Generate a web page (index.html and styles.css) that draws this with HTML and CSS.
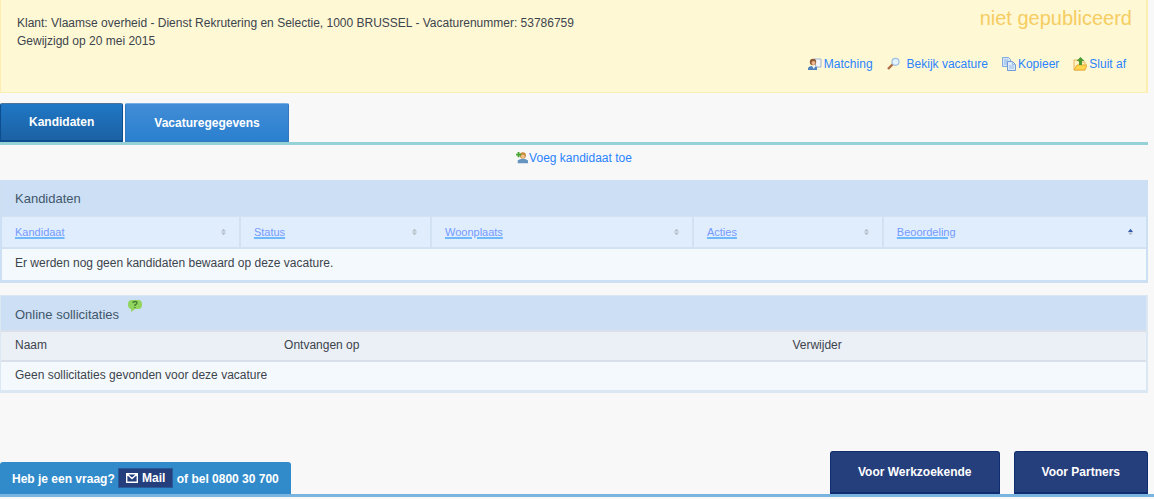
FILE: index.html
```html
<!DOCTYPE html>
<html lang="nl">
<head>
<meta charset="utf-8">
<meta name="viewport" content="width=device-width, initial-scale=1">
<title>Vacature</title>
<link rel="stylesheet" href="styles.css">
</head>
<body>
<div class="page">
<header class="notice">
  <div class="details">
    <p>Klant: Vlaamse overheid - Dienst Rekrutering en Selectie, 1000 BRUSSEL - Vacaturenummer: 53786759</p>
    <p>Gewijzigd op 20 mei 2015</p>
  </div>
  <div class="side">
    <div class="state">niet gepubliceerd</div>
    <nav class="actions">
      <a href="#"><svg class="icon" viewBox="0 0 14 14"><path d="M6 2h7v8H8z" fill="#f3f6fa" stroke="#9eb4cf"/><circle cx="5" cy="5" r="3.2" fill="#8f5a35"/><circle cx="5.5" cy="6" r="2" fill="#eeb78d"/><path d="M0 13v-2q1-2 4-2l5 1v3z" fill="#4f83bf"/><path d="M4 9l2 3 1-3" fill="#fff"/></svg>Matching</a>
      <a href="#" class="spaced"><svg class="icon" viewBox="0 0 14 14"><path d="M1 12l5-5" stroke="#b06d45" stroke-width="2.4"/><circle cx="8.5" cy="4.8" r="3.5" fill="#e3f3ff" stroke="#9ebfe4" stroke-width="1.2"/></svg>Bekijk vacature</a>
      <a href="#"><svg class="icon" viewBox="0 0 14 14"><path d="M.5 .5h6l2 2v7h-8z" fill="#d4e5f9" stroke="#80a9dc"/><path d="M2 3h4M2 5h4M2 7h3" stroke="#8fb4e2"/><path d="M5.500 4.500h5l3 3v6h-8z" fill="#dceafa" stroke="#6f9bd4"/><path d="M10.500 4.500v3h3M7 9h5M7 11h5" fill="none" stroke="#9dbde5"/></svg>Kopieer</a>
      <a href="#"><svg class="icon" viewBox="0 0 14 14"><path d="M1 3h4l1 2h6v8H1z" fill="#fff2c4" stroke="#e5b65b"/><path d="M1 13l3-5h10l-2 5z" fill="#ffd64d" stroke="#e7ad3a"/><path d="M7.500 0l4 4H9v4H6V4H3.500z" fill="#4c9b32"/></svg>Sluit af</a>
    </nav>
  </div>
</header>

<nav class="tabs">
  <button type="button" class="tab current">Kandidaten</button>
  <button type="button" class="tab">Vacaturegegevens</button>
</nav>
<div class="add"><a href="#"><svg class="icon" viewBox="0 0 14 14"><circle cx="8" cy="4" r="3.600" fill="#c58b3d"/><circle cx="8" cy="5" r="2.200" fill="#f0c086"/><path d="M2 13v-3q2-2 6-2t6 2v3z" fill="#6594bf"/><path d="M0 3h6M3 0v6" stroke="#4aa632" stroke-width="2.200"/></svg>Voeg kandidaat toe</a></div>

<section class="panel">
  <h2 class="title">Kandidaten</h2>
  <table class="grid candidates">
    <colgroup><col class="c1"><col class="c2"><col class="c3"><col class="c4"><col class="c5"></colgroup>
    <thead><tr>
      <th><div class="head"><a href="#">Kandidaat</a><svg class="sort" viewBox="0 0 6 8"><path d="M3 0l3 3.500H0zM0 4.500h6L3 8z"/></svg></div></th>
      <th><div class="head"><a href="#">Status</a><svg class="sort" viewBox="0 0 6 8"><path d="M3 0l3 3.500H0zM0 4.500h6L3 8z"/></svg></div></th>
      <th><div class="head"><a href="#">Woonplaats</a><svg class="sort" viewBox="0 0 6 8"><path d="M3 0l3 3.500H0zM0 4.500h6L3 8z"/></svg></div></th>
      <th><div class="head"><a href="#">Acties</a><svg class="sort" viewBox="0 0 6 8"><path d="M3 0l3 3.500H0zM0 4.500h6L3 8z"/></svg></div></th>
      <th><div class="head"><a href="#">Beoordeling</a><svg class="sort" viewBox="0 0 6 8"><path d="M0 4.500h6L3 8z"/><path class="on" d="M3 0l3 4H0z"/></svg></div></th>
    </tr></thead>
    <tbody><tr><td colspan="5">Er werden nog geen kandidaten bewaard op deze vacature.</td></tr></tbody>
  </table>
</section>

<section class="panel online">
  <h2 class="title">Online sollicitaties<svg class="help" viewBox="0 0 14 12"><path d="M4 0h6q4 0 4 4v1q0 4-4 4H7l-4 3V9Q0 8 0 5V4q0-4 4-4z" fill="#91d45e"/><path d="M5 3q0-1.500 2-1.500T9 3Q9 4 7 5v1M7 7v1" fill="none" stroke="#477e31" stroke-width="1.400"/></svg></h2>
  <table class="grid applications">
    <colgroup><col class="a1"><col class="a2"><col class="a3"></colgroup>
    <thead><tr><th>Naam</th><th>Ontvangen op</th><th>Verwijder</th></tr></thead>
    <tbody><tr><td colspan="3">Geen sollicitaties gevonden voor deze vacature</td></tr></tbody>
  </table>
</section>
</div>

<footer class="footer">
  <div class="contact">Heb je een vraag?
    <a class="mail" href="#"><svg class="envelope" viewBox="0 0 12 10"><path d="M.7 .7h10.600v8.600H.7zM1 1l5 4.500L11 1" fill="none" stroke="#fff" stroke-width="1.400"/></svg>Mail</a>
    of bel 0800 30 700</div>
  <nav class="links">
    <a href="#">Voor Werkzoekende</a>
    <a href="#">Voor Partners</a>
  </nav>
</footer>
</body>
</html>
```
FILE: styles.css
```css
* { box-sizing: border-box; }
body {
  margin: 0;
  background: #f8f8f8;
  color: #3c444c;
  font: 12px/18px "Liberation Sans", Arial, sans-serif;
}
a { color: #2a83ff; text-decoration: none; }
p { margin: 0; }
.page { padding-right: 6px; }

.notice {
  display: flex;
  justify-content: space-between;
  background: #fff8d5;
  border: 1px solid #fbeeb0;
  border-top: 0;
  border-right-width: 2px;
}
.details { padding: 14px 16px; }
.side { padding: 6px 14px 19px 0; text-align: right; }
.state { color: #f5cd62; font-size: 20px; line-height: 24px; }
.actions {
  display: flex;
  justify-content: flex-end;
  gap: 14px;
  padding: 25px 6px 0 0;
}
.actions a, .add a { display: flex; align-items: center; gap: 2px; }
.actions .spaced { gap: 6px; }
.icon { width: 14px; height: 14px; }

.tabs {
  display: flex;
  gap: 2px;
  margin-top: 10px;
  border-bottom: 3px solid #96d1d8;
}
.tab {
  height: 39px;
  padding: 0 28px;
  border: 1px solid #3478bd;
  border-top-color: #78aee1;
  border-radius: 2px 2px 0 0;
  background: linear-gradient(#428cd6, #2a80cf);
  color: #fff;
  font: bold 12px/16px "Liberation Sans", Arial, sans-serif;
}
.current {
  border: 1px solid #0b4d8e;
  border-bottom-width: 2px;
  border-top-color: #4d7398;
  background: linear-gradient(#1f77c5, #1c61a3);
}
.add { display: flex; justify-content: center; padding: 4px 0 13px; }
.add .icon { width: 12px; height: 12px; }
.add a { gap: 1px; }

.panel { border: 1px solid #cddff3; border-width: 1px 2px 3px; }
.online { margin-top: 12px; border-color: #dbe7f2; border-left-width: 1px; }
.title {
  margin: 0;
  padding: 9px 13px 8px;
  background: #cddff4;
  color: #41576c;
  font-size: 13px;
  font-weight: normal;
  line-height: 18px;
}
.grid {
  width: 100%;
  border-collapse: collapse;
  table-layout: fixed;
}
.grid th { padding: 0 13px; text-align: left; font-weight: normal; }
.grid td { padding: 0 13px; background: #f4f9fd; }
.candidates th {
  height: 31px;
  border: 2px solid #d2e2f3;
  border-width: 1px 2px 2px 0;
  background: #e0edfd;
}
.candidates th:last-child { border-right: 0; }
.candidates td { height: 32px; padding-bottom: 3px; }
.head { display: flex; align-items: center; justify-content: space-between; font-size: 11px; }
.head a { text-decoration: underline 2px #70b9ff; text-underline-offset: 1px; color: #749aff; }
.sort { width: 5px; height: 8px; fill: #b5bec8; }
.sort .on { fill: #3057a8; }
.c1 { width: 20.8%; }
.c2 { width: 16.7%; }
.c3 { width: 22.9%; }
.c4 { width: 16.6%; }
.c5 { width: 23%; }
.online .title {
  display: flex;
  align-items: flex-start;
  gap: 9px;
  padding: 10px 14px 6px;
}
.online .help { width: 14px; height: 12px; margin-top: -6px; }
.applications th {
  height: 30px;
  padding: 0 14px 2px;
  border: 2px solid #d9e0ea;
  border-width: 2px 0;
  background: #ebeff6;
}
.applications td { height: 29px; padding: 0 14px 2px; }
.a1 { width: 23.5%; }
.a2 { width: 44.4%; }

.footer {
  display: flex;
  align-items: flex-end;
  justify-content: space-between;
  margin-top: 58px;
  padding-right: 6px;
  border-bottom: 3px solid #78b4df;
}
.contact {
  padding: 6px 12px;
  border-radius: 3px 3px 0 0;
  background: #318bcb;
  color: #fff;
  font: bold 12px/18px "Liberation Sans", Arial, sans-serif;
}
.mail {
  display: inline-flex;
  align-items: center;
  gap: 4px;
  padding: 0 7px;
  border: 1px solid #285b99;
  background: #253e7c;
  color: #fff;
}
.envelope { width: 12px; height: 10px; }
.links { display: flex; gap: 14px; }
.links a {
  padding: 11px 27px;
  border: 1px solid #102d70;
  border-bottom-width: 2px;
  border-radius: 3px 3px 0 0;
  background: #253e7c;
  color: #fff;
  font: bold 12px/18px "Liberation Sans", Arial, sans-serif;
}
```
